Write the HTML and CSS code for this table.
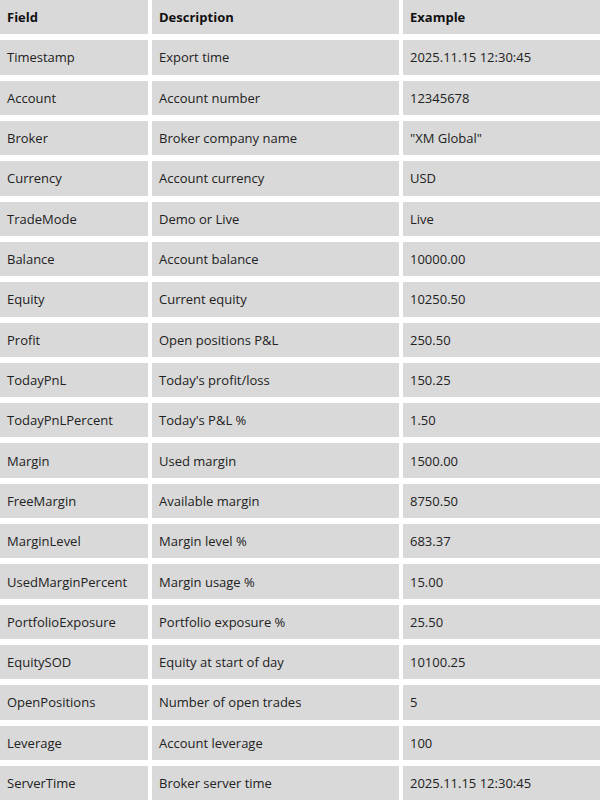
FILE: index.html
```html
<!DOCTYPE html>
<html>
<head>
<meta charset="utf-8">
<link rel="stylesheet" href="styles.css">
</head>
<body>
<div class="table">
  <div class="cell head">Field</div><div class="cell head">Description</div><div class="cell head">Example</div>
  <div class="cell">Timestamp</div><div class="cell">Export time</div><div class="cell">2025.11.15 12:30:45</div>
  <div class="cell">Account</div><div class="cell">Account number</div><div class="cell">12345678</div>
  <div class="cell">Broker</div><div class="cell">Broker company name</div><div class="cell">"XM Global"</div>
  <div class="cell">Currency</div><div class="cell">Account currency</div><div class="cell">USD</div>
  <div class="cell">TradeMode</div><div class="cell">Demo or Live</div><div class="cell">Live</div>
  <div class="cell">Balance</div><div class="cell">Account balance</div><div class="cell">10000.00</div>
  <div class="cell">Equity</div><div class="cell">Current equity</div><div class="cell">10250.50</div>
  <div class="cell">Profit</div><div class="cell">Open positions P&amp;L</div><div class="cell">250.50</div>
  <div class="cell">TodayPnL</div><div class="cell">Today's profit/loss</div><div class="cell">150.25</div>
  <div class="cell">TodayPnLPercent</div><div class="cell">Today's P&amp;L %</div><div class="cell">1.50</div>
  <div class="cell">Margin</div><div class="cell">Used margin</div><div class="cell">1500.00</div>
  <div class="cell">FreeMargin</div><div class="cell">Available margin</div><div class="cell">8750.50</div>
  <div class="cell">MarginLevel</div><div class="cell">Margin level %</div><div class="cell">683.37</div>
  <div class="cell">UsedMarginPercent</div><div class="cell">Margin usage %</div><div class="cell">15.00</div>
  <div class="cell">PortfolioExposure</div><div class="cell">Portfolio exposure %</div><div class="cell">25.50</div>
  <div class="cell">EquitySOD</div><div class="cell">Equity at start of day</div><div class="cell">10100.25</div>
  <div class="cell">OpenPositions</div><div class="cell">Number of open trades</div><div class="cell">5</div>
  <div class="cell">Leverage</div><div class="cell">Account leverage</div><div class="cell">100</div>
  <div class="cell">ServerTime</div><div class="cell">Broker server time</div><div class="cell">2025.11.15 12:30:45</div>
</div>
</body>
</html>
```
FILE: styles.css
```css
html, body {
  margin: 0;
  padding: 0;
  background: #ffffff;
}
body {
  font-family: "Open Sans", "DejaVu Sans", sans-serif;
  font-size: 13px;
  color: #222222;
}
.table {
  display: grid;
  grid-template-columns: 148px 247px 197px;
  grid-auto-rows: 34.32px;
  column-gap: 4px;
  row-gap: 6px;
}
.cell {
  background: #d9d9d9;
  display: flex;
  align-items: center;
  padding: 0 7px;
  white-space: nowrap;
  overflow: hidden;
}
.head {
  font-weight: 700;
  color: #111111;
}
```
